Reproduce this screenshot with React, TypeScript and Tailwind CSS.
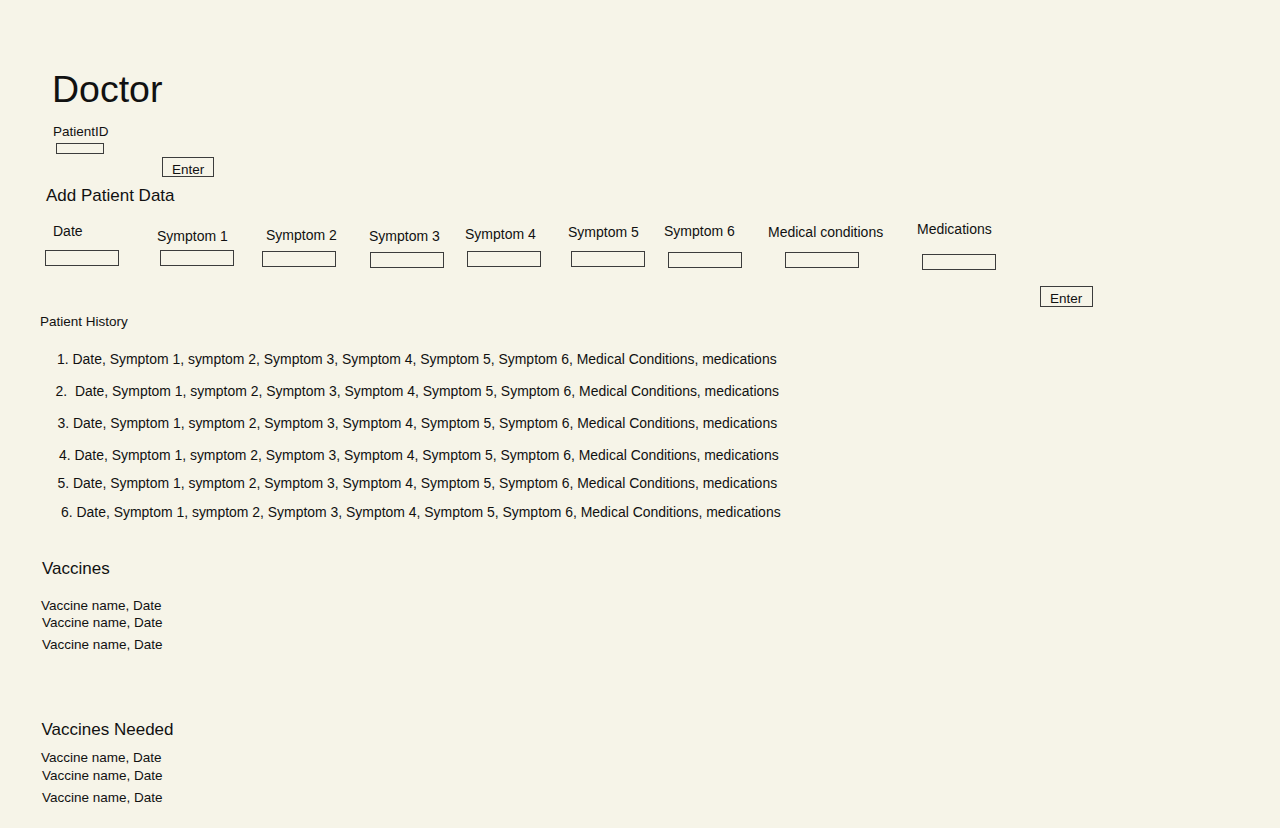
import React from "react";

const fields = [
  { label: "Date", w: 112, lml: 8, lmt: 4, bml: 0, bmt: 12 },
  { label: "Symptom 1", w: 104, lml: 0, lmt: 9, bml: 3, bmt: 7 },
  { label: "Symptom 2", w: 108, lml: 5, lmt: 8, bml: 1, bmt: 9 },
  { label: "Symptom 3", w: 96, lml: 0, lmt: 9, bml: 1, bmt: 9 },
  { label: "Symptom 4", w: 103, lml: 0, lmt: 7, bml: 2, bmt: 10 },
  { label: "Symptom 5", w: 95, lml: 0, lmt: 5, bml: 3, bmt: 12 },
  { label: "Symptom 6", w: 104, lml: 1, lmt: 4, bml: 5, bmt: 14 },
  { label: "Medical conditions", w: 150, lml: 1, lmt: 5, bml: 18, bmt: 13 },
  { label: "Medications", w: 120, lml: 0, lmt: 2, bml: 5, bmt: 18 },
];

const historyText =
  "Date, Symptom 1, symptom 2, Symptom 3, Symptom 4, Symptom 5, Symptom 6, Medical Conditions, medications";

const history = [
  { n: "1. ", ml: "ml-[57px]", mt: "mt-[25px]" },
  { n: "2.  ", ml: "ml-[55.5px]", mt: "mt-[18px]" },
  { n: "3. ", ml: "ml-[57.5px]", mt: "mt-[18px]" },
  { n: "4. ", ml: "ml-[59px]", mt: "mt-[18px]" },
  { n: "5. ", ml: "ml-[57.5px]", mt: "mt-[14px]" },
  { n: "6. ", ml: "ml-[61px]", mt: "mt-[15px]" },
];

export default function App() {
  return (
    <div
      className="min-h-[828px] w-full overflow-hidden bg-[#f6f4e8] text-[#111] pt-[71px]"
      style={{ fontFamily: '"Liberation Sans", Arial, Helvetica, sans-serif' }}
    >
      <h1 className="ml-[52px] text-[37.5px] leading-none font-normal">Doctor</h1>

      <div className="ml-[53px] mt-[16.5px] text-[13.5px] leading-none">PatientID</div>
      <div className="ml-[56px] mt-[4px] h-[11px] w-[48px] border border-[#3c3c3c]" />
      <button className="ml-[162px] mt-[3px] box-border block h-[20px] w-[52px] border border-[#3c3c3c] pl-[9px] pt-[5px] text-left text-[13.5px] leading-none">
        Enter
      </button>

      <h2 className="ml-[46px] mt-[10px] text-[17px] leading-none font-normal">Add Patient Data</h2>

      <div className="ml-[45px] mt-[16px] flex items-start">
        {fields.map((f) => (
          <div key={f.label} className="flex shrink-0 flex-col" style={{ width: f.w }}>
            <div
              className="whitespace-nowrap text-[14px] leading-none"
              style={{ marginLeft: f.lml, marginTop: f.lmt }}
            >
              {f.label}
            </div>
            <div
              className="h-[16px] w-[74px] border border-[#3c3c3c]"
              style={{ marginLeft: f.bml, marginTop: f.bmt }}
            />
          </div>
        ))}
      </div>

      <button className="ml-[1040px] mt-[16px] box-border block h-[21px] w-[53px] border border-[#3c3c3c] pl-[9px] pt-[5px] text-left text-[13.5px] leading-none">
        Enter
      </button>

      <div className="ml-[40px] mt-[8px] text-[13.5px] leading-none">Patient History</div>

      {history.map((h, i) => (
        <div key={i} className={`${h.ml} ${h.mt} whitespace-pre text-[13.95px] leading-none`}>
          {h.n}
          {historyText}
        </div>
      ))}

      <h3 className="ml-[42px] mt-[40px] text-[17px] leading-none font-normal">Vaccines</h3>
      <div className="ml-[41px] mt-[22px] text-[13.5px] leading-none">Vaccine name, Date</div>
      <div className="ml-[42px] mt-[4px] text-[13.5px] leading-none">Vaccine name, Date</div>
      <div className="ml-[42px] mt-[8px] text-[13.5px] leading-none">Vaccine name, Date</div>

      <h3 className="ml-[41.5px] mt-[70px] text-[17px] leading-none font-normal">Vaccines Needed</h3>
      <div className="ml-[41px] mt-[13px] text-[13.5px] leading-none">Vaccine name, Date</div>
      <div className="ml-[42px] mt-[4px] text-[13.5px] leading-none">Vaccine name, Date</div>
      <div className="ml-[42px] mt-[9px] text-[13.5px] leading-none">Vaccine name, Date</div>
    </div>
  );
}
